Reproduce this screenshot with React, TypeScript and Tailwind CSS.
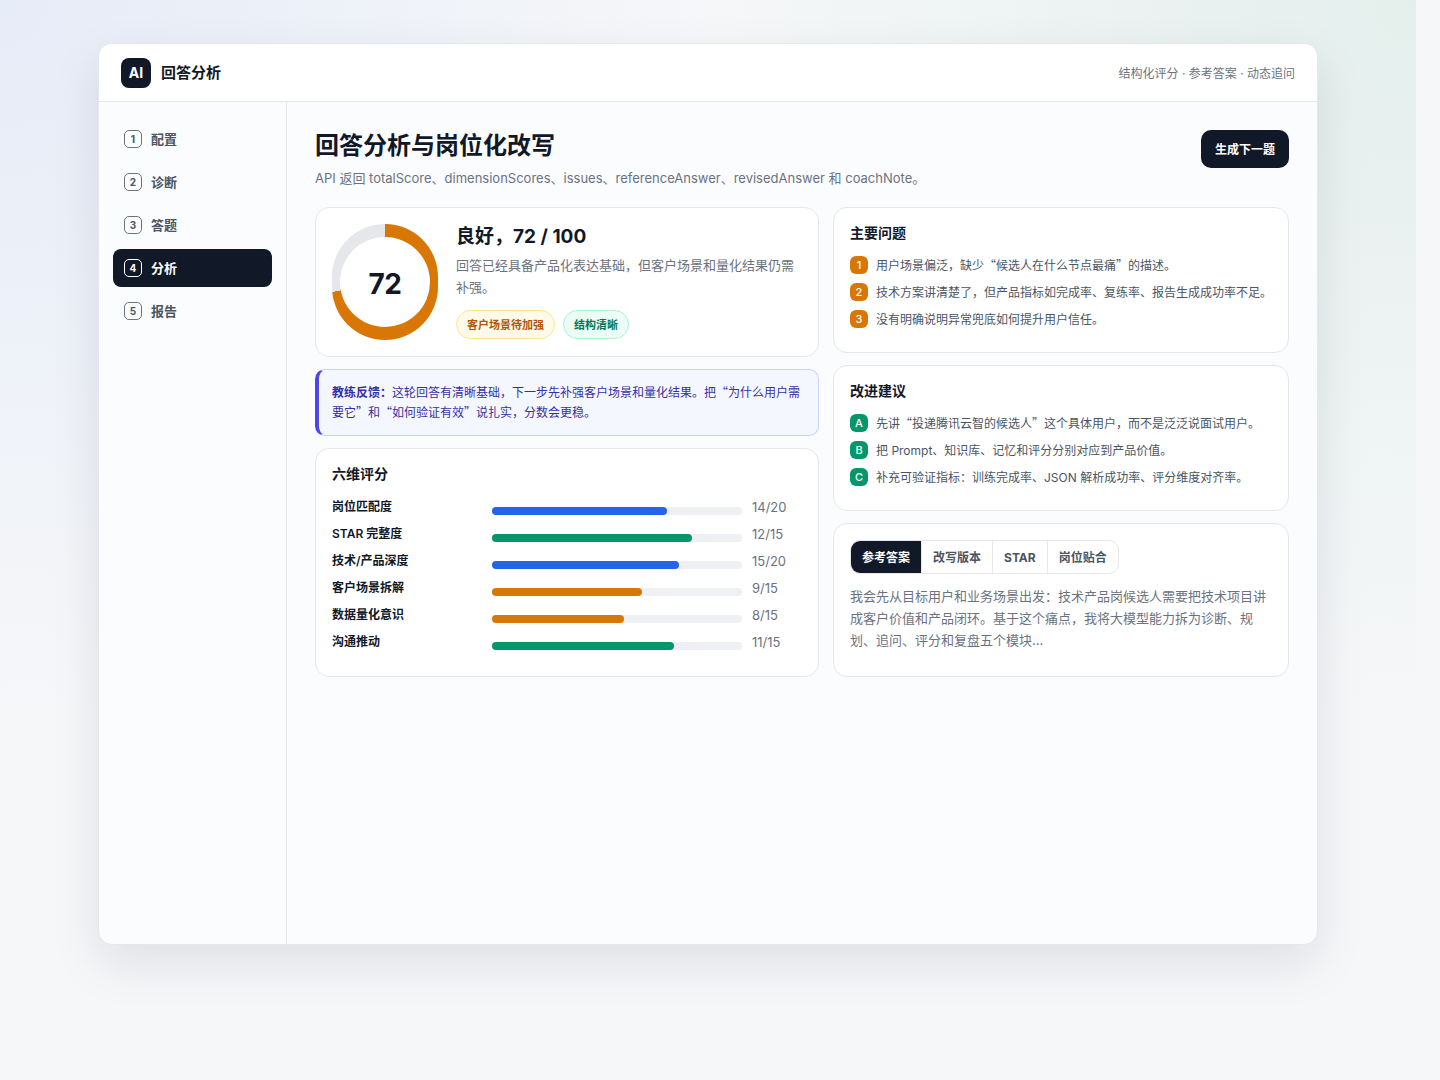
import React from "react";

const steps = [
  { n: "1", label: "配置" },
  { n: "2", label: "诊断" },
  { n: "3", label: "答题" },
  { n: "4", label: "分析", active: true },
  { n: "5", label: "报告" },
];

const scores = [
  { label: "岗位匹配度", value: "14/20", width: 70, color: "bg-[#2563eb]" },
  { label: "STAR 完整度", value: "12/15", width: 80, color: "bg-[#059669]" },
  { label: "技术/产品深度", value: "15/20", width: 74.8, color: "bg-[#2563eb]" },
  { label: "客户场景拆解", value: "9/15", width: 60, color: "bg-[#d97706]" },
  { label: "数据量化意识", value: "8/15", width: 52.8, color: "bg-[#d97706]" },
  { label: "沟通推动", value: "11/15", width: 72.8, color: "bg-[#059669]" },
];

const issues = [
  "用户场景偏泛，缺少“候选人在什么节点最痛”的描述。",
  "技术方案讲清楚了，但产品指标如完成率、复练率、报告生成成功率不足。",
  "没有明确说明异常兜底如何提升用户信任。",
];

const tips = [
  "先讲“投递腾讯云智的候选人”这个具体用户，而不是泛泛说面试用户。",
  "把 Prompt、知识库、记忆和评分分别对应到产品价值。",
  "补充可验证指标：训练完成率、JSON 解析成功率、评分维度对齐率。",
];

const tabs = ["参考答案", "改写版本", "STAR", "岗位贴合"];

// curly quotes take the full CJK width, Inter's own are too narrow
const Quoted = ({ text }: { text: string }) => (
  <>
    {text.split(/([“”])/).map((part, i) =>
      part === "“" || part === "”" ? (
        <span key={i} className="font-['Noto_Sans_CJK_SC',sans-serif] leading-none">{part}</span>
      ) : (
        part
      ),
    )}
  </>
);

const ListCard = ({ title, items, marks, color }: { title: string; items: string[]; marks: string[]; color: string }) => (
  <div className="rounded-[14px] border border-[#e5e7eb] bg-white px-4 pt-[15px] pb-[24px]">
    <h3 className="mb-[13px] text-[14px] leading-[20px] font-bold text-[#111827]">{title}</h3>
    <div className="flex flex-col gap-[9px]">
      {items.map((item, i) => (
        <div key={item} className="flex h-[18px] gap-2 text-[12px] leading-[20px] text-[#4b5563]">
          <span className={`flex h-[18px] w-[18px] shrink-0 items-center justify-center rounded-[6px] text-[11px] font-medium text-white ${color}`}>
            {marks[i]}
          </span>
          <span><Quoted text={item} /></span>
        </div>
      ))}
    </div>
  </div>
);

export default function App() {
  return (
    <div className="min-h-[1080px] bg-[#f6f7f9] font-['Inter','Noto_Sans_CJK_SC',sans-serif]">
      <div className="h-[1080px] w-[1416px] bg-[radial-gradient(circle_at_0%_0%,#e6ecf8_0,transparent_40%),radial-gradient(circle_at_100%_0%,#e4efec_0,transparent_40%)] pt-[43px]">
        <div className="mx-auto flex h-[902px] w-[1220px] flex-col overflow-hidden rounded-[14px] border border-[#e5e7eb] bg-[#fbfcfe] shadow-[0_18px_50px_rgba(17,24,39,0.1)]">
          <header className="flex h-[58px] shrink-0 items-center justify-between border-b border-[#e5e7eb] bg-white px-[22px]">
            <div className="flex items-center gap-[10px]">
              <span className="flex h-[30px] w-[30px] items-center justify-center rounded-[8px] bg-[#111827] text-[14px] font-bold text-white">AI</span>
              <span className="pt-[2px] text-[15px] font-bold text-[#111827]">回答分析</span>
            </div>
            <span className="pt-[2px] text-[12px] text-[#6b7280]">结构化评分 · 参考答案 · 动态追问</span>
          </header>
          <div className="flex min-h-0 flex-1">
            <aside className="w-[188px] shrink-0 border-r border-[#e5e7eb] px-[14px] pt-[18px]">
              <nav className="flex flex-col gap-[5px]">
                {steps.map((s) => (
                  <div
                    key={s.n}
                    className={`flex h-[38px] items-center gap-[9px] rounded-[8px] px-[11px] text-[13px] font-semibold ${s.active ? "bg-[#111827] text-white" : "text-[#4b5563]"}`}
                  >
                    <span className={`flex h-[18px] w-[18px] items-center justify-center rounded-[5px] border text-[10px] font-bold ${s.active ? "border-white" : "border-[#6b7280]"}`}>
                      {s.n}
                    </span>
                    <span className="pt-[2px]">{s.label}</span>
                  </div>
                ))}
              </nav>
            </aside>
            <main className="flex-1 px-[28px] pt-[28px]">
              <div className="flex items-start justify-between">
                <div>
                  <h1 className="text-[24px] leading-[32px] font-bold text-[#111827]">回答分析与岗位化改写</h1>
                  <p className="mt-[6px] text-[13px] leading-[20px] text-[#6b7280]">API 返回 totalScore、dimensionScores、issues、referenceAnswer、revisedAnswer 和 coachNote。</p>
                </div>
                <button className="h-[38px] rounded-[10px] bg-[#111827] px-[14px] pt-[2px] text-[12px] font-bold text-white">生成下一题</button>
              </div>
              <div className="mt-[19px] grid grid-cols-[504px_456px] gap-[14px]">
                <div className="flex flex-col gap-[12px]">
                  <div className="flex h-[150px] gap-[18px] rounded-[14px] border border-[#e5e7eb] bg-white p-4">
                    <div className="flex h-[116px] w-[106px] shrink-0 items-center justify-center rounded-full bg-[conic-gradient(#d97706_0_72%,#e5e7eb_0)]">
                      <span className="flex h-[90px] w-[90px] items-center justify-center rounded-full bg-white pt-[3px] text-[28px] font-bold tracking-[-0.5px] text-[#111827]">72</span>
                    </div>
                    <div className="min-w-0 flex-1">
                      <div className="text-[19px] leading-[26px] font-bold text-[#111827]">良好，72 / 100</div>
                      <p className="mt-[4px] text-[13px] leading-[22px] text-[#6b7280]">回答已经具备产品化表达基础，但客户场景和量化结果仍需补强。</p>
                      <div className="mt-[12px] flex gap-2">
                        <span className="rounded-full border border-[#fde68a] bg-[#fffbeb] px-[10px] pt-[6px] pb-[4px] text-[11px] leading-[17px] font-bold text-[#b45309]">客户场景待加强</span>
                        <span className="rounded-full border border-[#a7f3d0] bg-[#ecfdf5] px-[10px] pt-[6px] pb-[4px] text-[11px] leading-[17px] font-bold text-[#047857]">结构清晰</span>
                      </div>
                    </div>
                  </div>
                  <div className="rounded-[10px] border border-[#c7d2fe] border-l-4 border-l-[#4f46e5] bg-[#f5f7ff] pt-[13px] pr-[13px] pb-[12px] pl-[13px] text-[12px] leading-[20px] text-[#3730a3]">
                    <strong>教练反馈：</strong>
                    <Quoted text="这轮回答有清晰基础，下一步先补强客户场景和量化结果。把“为什么用户需要它”和“如何验证有效”说扎实，分数会更稳。" />
                  </div>
                  <div className="rounded-[14px] border border-[#e5e7eb] bg-white px-4 pt-[15px] pb-[25px]">
                    <h3 className="mb-[14px] text-[14px] leading-[20px] font-bold text-[#111827]">六维评分</h3>
                    <div className="flex flex-col gap-[9px]">
                      {scores.map((s) => (
                        <div key={s.label} className="grid h-[18px] grid-cols-[160px_250px_1fr] text-[12px] leading-[18px]">
                          <span className="font-semibold text-[#111827]">{s.label}</span>
                          <div className="mt-[9px] h-2 rounded-full bg-[#eef0f4]">
                            <div className={`h-2 rounded-full ${s.color}`} style={{ width: `${s.width}%` }} />
                          </div>
                          <span className="pl-[10px] text-[13px] text-[#6b7280]">{s.value}</span>
                        </div>
                      ))}
                    </div>
                  </div>
                </div>
                <div className="flex flex-col gap-[12px]">
                  <ListCard title="主要问题" items={issues} marks={["1", "2", "3"]} color="bg-[#d97706]" />
                  <ListCard title="改进建议" items={tips} marks={["A", "B", "C"]} color="bg-[#059669]" />
                  <div className="flex-1 rounded-[14px] border border-[#e5e7eb] bg-white px-4 pt-4">
                    <div className="inline-flex overflow-hidden rounded-[10px] border border-[#e5e7eb]">
                      {tabs.map((t, i) => (
                        <span key={t} className={`px-[11px] pt-[8px] pb-[6px] text-[12px] leading-[18px] font-bold ${i === 0 ? "bg-[#111827] text-white" : "border-l border-[#e5e7eb] text-[#4b5563]"}`}>
                          {t}
                        </span>
                      ))}
                    </div>
                    <p className="mt-[11px] text-[13px] leading-[22px] text-[#6b7280]">我会先从目标用户和业务场景出发：技术产品岗候选人需要把技术项目讲成客户价值和产品闭环。基于这个痛点，我将大模型能力拆为诊断、规划、追问、评分和复盘五个模块...</p>
                  </div>
                </div>
              </div>
            </main>
          </div>
        </div>
      </div>
    </div>
  );
}
